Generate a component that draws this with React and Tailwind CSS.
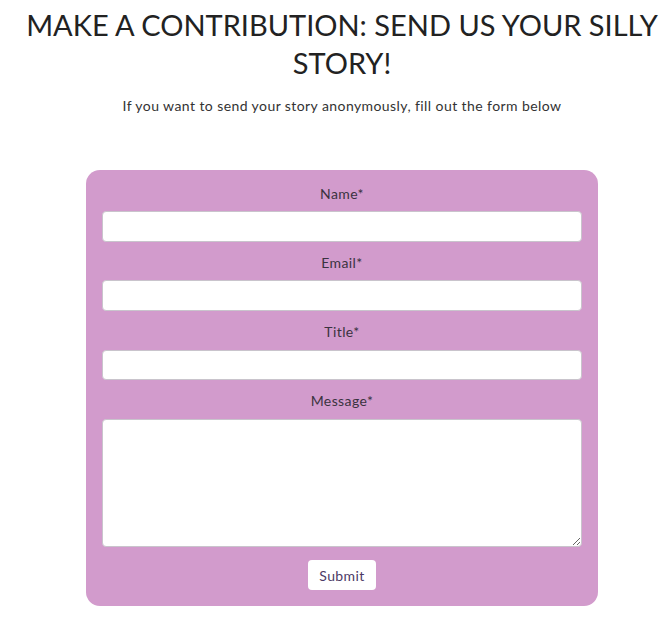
import React from "react";

export default function App() {
  const font = { fontFamily: "Lato, 'Noto Sans', sans-serif" };
  const label = "text-center text-[14px] leading-[20px] tracking-[0.4px] text-[#3a3340]";
  return (
    <div className="min-h-[619px] bg-white pl-[14px] text-[#222]" style={font}>
      <h1 className="pt-[6px] text-center text-[29px] leading-[38px] font-normal text-[#222]">
        MAKE A CONTRIBUTION: SEND US YOUR SILLY
        <br />
        STORY!
      </h1>
      <p className="mt-[14px] text-center text-[14px] leading-[20px] tracking-[0.42px] text-[#333]">
        If you want to send your story anonymously, fill out the form below
      </p>
      <form
        className="mx-auto mt-[54px] flex w-[512px] flex-col rounded-[14px] bg-[#d29bcc] px-[16px] pt-[14px] pb-[16px]"
        onSubmit={(e) => e.preventDefault()}
      >
        <label className={label}>Name*</label>
        <input className="mt-[7px] h-[31px] rounded-[4px] border border-[#c9c4cc] bg-white" />
        <label className={"mt-[11px] " + label}>Email*</label>
        <input className="mt-[7px] h-[31px] rounded-[4px] border border-[#c9c4cc] bg-white" />
        <label className={"mt-[11px] " + label}>Title*</label>
        <input className="mt-[8px] h-[30px] rounded-[4px] border border-[#c9c4cc] bg-white" />
        <label className={"mt-[11px] " + label}>Message*</label>
        <textarea className="mt-[8px] h-[128px] resize rounded-[4px] border border-[#c9c4cc] bg-white" />
        <button
          type="submit"
          className="mx-auto mt-[13px] h-[30px] w-[68px] rounded-[4px] bg-white text-[14px] tracking-[0.4px] text-[#4b3a66]"
        >
          Submit
        </button>
      </form>
    </div>
  );
}
